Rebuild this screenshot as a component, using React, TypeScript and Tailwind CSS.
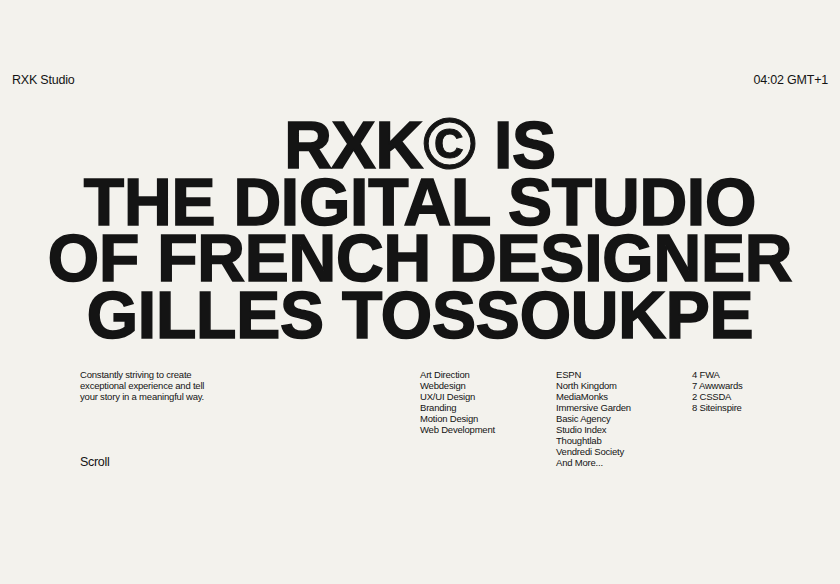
import React from "react";

const font = { fontFamily: '"Liberation Sans", Arial, sans-serif' };

export default function App() {
  return (
    <div
      className="w-[840px] h-[584px] bg-[#f3f2ed] text-[#141414] overflow-hidden flex flex-col"
      style={font}
    >
      <div className="flex justify-between items-center px-3 pt-[72px] text-[12.5px] leading-[16px] tracking-[-0.2px]">
        <span>RXK Studio</span>
        <span>04:02 GMT+1</span>
      </div>
      <h1 className="mt-[29px] text-center font-bold text-[66px] leading-[56.5px] tracking-[-0.2px] uppercase [-webkit-text-stroke:1.6px_#141414]">
        <div>
          RXK<span className="text-[72px] leading-[0] [-webkit-text-stroke:1px_#141414]">©</span> IS
        </div>
        <div>THE DIGITAL STUDIO</div>
        <div>OF FRENCH DESIGNER</div>
        <div>GILLES TOSSOUKPE</div>
      </h1>
      <div className="mt-[26px] flex text-[9.5px] leading-[11px] tracking-[-0.2px]">
        <div className="w-[420px] pl-[80px] flex flex-col">
          <p className="w-[140px]">
            Constantly striving to create exceptional experience and tell your story in a meaningful way.
          </p>
          <p className="mt-[52px] text-[12.5px] leading-[16px] tracking-[-0.3px]">Scroll</p>
        </div>
        <div className="w-[136px] flex flex-col">
          <span>Art Direction</span>
          <span>Webdesign</span>
          <span>UX/UI Design</span>
          <span>Branding</span>
          <span>Motion Design</span>
          <span>Web Development</span>
        </div>
        <div className="w-[136px] flex flex-col">
          <span>ESPN</span>
          <span>North Kingdom</span>
          <span>MediaMonks</span>
          <span>Immersive Garden</span>
          <span>Basic Agency</span>
          <span>Studio Index</span>
          <span>Thoughtlab</span>
          <span>Vendredi Society</span>
          <span>And More...</span>
        </div>
        <div className="flex flex-col">
          <span>4 FWA</span>
          <span>7 Awwwards</span>
          <span>2 CSSDA</span>
          <span>8 Siteinspire</span>
        </div>
      </div>
    </div>
  );
}
